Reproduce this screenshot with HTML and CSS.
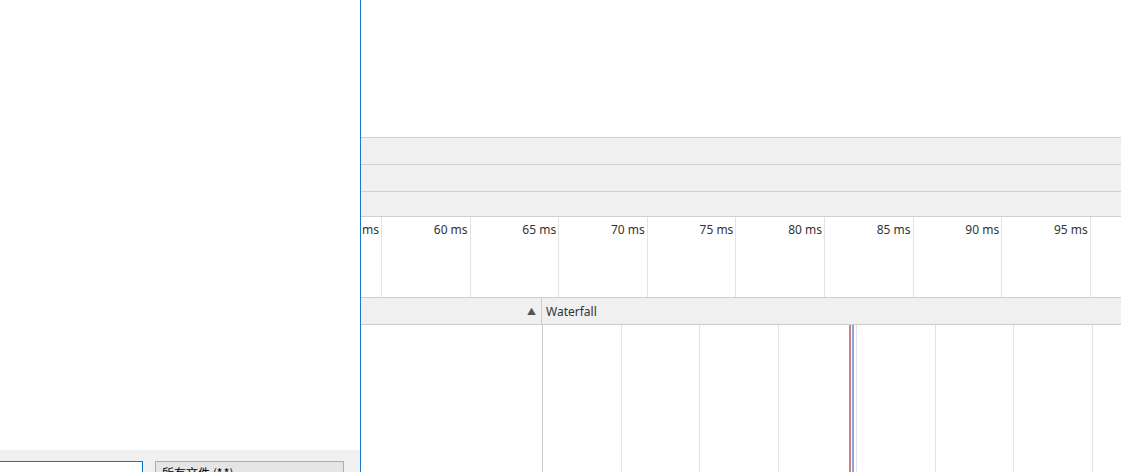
FILE: index.html
```html
<!DOCTYPE html>
<html>
<head>
<meta charset="utf-8">
<link rel="stylesheet" href="styles.css">
</head>
<body>
<div class="app">
  <div class="left">
    <div class="left-fill"></div>
    <div class="left-bar">
      <div class="name-input"></div>
      <div class="type-select"><span>所有文件 (*.*)</span><span class="caret">⌄</span></div>
    </div>
  </div>
  <div class="right">
    <div class="top-blank"></div>
    <div class="band band1"></div>
    <div class="band band2"></div>
    <div class="band band3"></div>
    <div class="ruler">
      <div class="tick first"><span>55 ms</span></div>
      <div class="tick"><span>60 ms</span></div>
      <div class="tick"><span>65 ms</span></div>
      <div class="tick"><span>70 ms</span></div>
      <div class="tick"><span>75 ms</span></div>
      <div class="tick"><span>80 ms</span></div>
      <div class="tick"><span>85 ms</span></div>
      <div class="tick"><span>90 ms</span></div>
      <div class="tick"><span>95 ms</span></div>
      <div class="tick"><span>100 ms</span></div>
    </div>
    <div class="table-head">
      <div class="col-name"><span class="sort">▲</span></div>
      <div class="col-wf">Waterfall</div>
    </div>
    <div class="table-body">
      <div class="col-name-body"></div>
      <div class="wf-body">
        <div class="grid">
          <div class="gcell"></div><div class="gcell"></div><div class="gcell"></div><div class="gcell"></div>
          <div class="gcell"></div><div class="gcell"></div><div class="gcell"></div><div class="gcell"></div>
        </div>
        <div class="marker red"></div>
        <div class="marker blue"></div>
      </div>
    </div>
  </div>
</div>
</body>
</html>
```
FILE: styles.css
```css
html, body {
  margin: 0;
  padding: 0;
  height: 100%;
  overflow: hidden;
  background: #ffffff;
  font-family: "Segoe UI", "Noto Sans", "Noto Sans CJK SC", sans-serif;
  font-size: 12px;
  color: #333;
}
.app {
  display: flex;
  width: 1121px;
  height: 472px;
}
.left {
  width: 360px;
  flex: none;
  border-right: 1px solid #1979d2;
  display: flex;
  flex-direction: column;
  background: #fff;
}
.left-fill { height: 450px; flex: none; }
.left-bar {
  flex: 1;
  background: #f0f0f0;
  display: flex;
  align-items: flex-start;
  padding-top: 11px;
}
.name-input {
  margin-left: -1px;
  width: 142px;
  height: 22px;
  border: 1px solid #0078d7;
  background: #fff;
  flex: none;
}
.type-select {
  margin-left: 12px;
  border: 1px solid #adadad;
  background: #e5e5e5;
  flex: none;
  display: flex;
  justify-content: space-between;
  padding: 0 6px;
  box-sizing: border-box;
  width: 189px;
  height: 24px;
  font-family: "Noto Sans CJK SC", sans-serif;
  font-size: 12px;
  line-height: 22px;
  color: #000;
}
.caret { color: #666; font-size: 10px; }
.right {
  flex: 1;
  display: flex;
  flex-direction: column;
  overflow: hidden;
  min-width: 0;
}
.top-blank { height: 137px; flex: none; }
.band {
  flex: none;
  background: #f0f0f0;
  border-top: 1px solid #cfcfcf;
}
.band1 { height: 26px; }
.band2 { height: 26px; }
.band3 { height: 24px; border-bottom: 1px solid #cfcfcf; }
.ruler {
  height: 80px;
  flex: none;
  display: flex;
  overflow: hidden;
}
.tick {
  flex: none;
  border-right: 1px solid #e3e3e3;
  display: flex;
  justify-content: flex-end;
  align-items: flex-start;
  white-space: nowrap;
  padding: 4px 2px 0 0;
  box-sizing: border-box;
  width: 88.6px;
  color: #333;
}
.tick.first {
  width: 21px;
  overflow: hidden;
}
.tick span { flex: none; }
.table-head {
  flex: none;
  height: 26px;
  display: flex;
  background: #f0f0f0;
  border-top: 1px solid #cccccc;
  border-bottom: 1px solid #cccccc;
}
.col-name {
  width: 181px;
  flex: none;
  border-right: 1px solid #cccccc;
  display: flex;
  justify-content: flex-end;
  align-items: center;
  padding-right: 5px;
  box-sizing: border-box;
}
.sort { font-size: 9px; color: #555; }
.col-wf {
  flex: 1;
  padding-left: 4px;
  padding-top: 1px;
  line-height: 26px;
  color: #333;
}
.table-body {
  flex: 1;
  display: flex;
}
.col-name-body {
  width: 181px;
  flex: none;
  border-right: 1px solid #cccccc;
}
.wf-body {
  flex: 1;
  position: relative;
  overflow: hidden;
}
.grid {
  display: flex;
  height: 100%;
}
.gcell {
  flex: none;
  width: 78.5px;
  box-sizing: border-box;
  border-right: 1px solid #e3e3e3;
}
.marker {
  position: absolute;
  top: 0;
  bottom: 0;
  width: 2px;
}
.marker.red { left: 306px; background: #cf8080; }
.marker.blue { left: 309px; background: #8ea4e0; }
```
